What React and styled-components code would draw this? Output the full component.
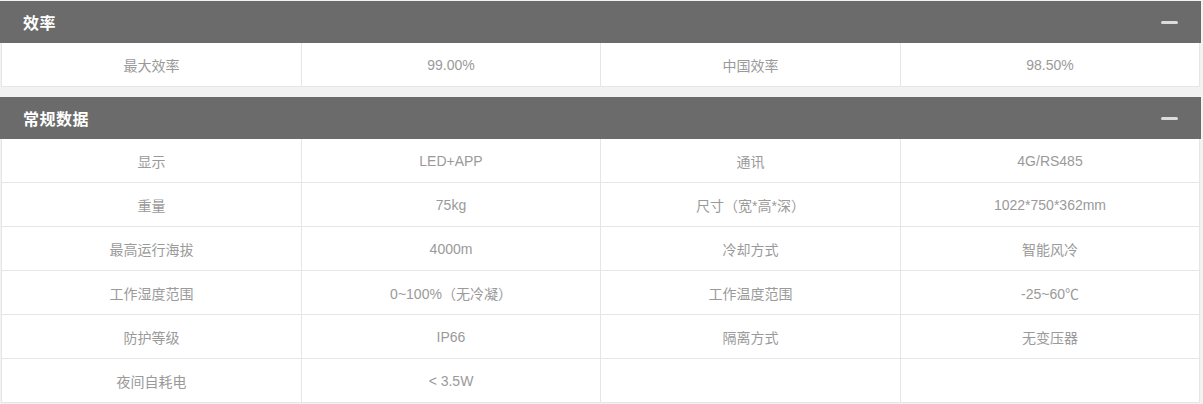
import React from 'react'
import styled, { createGlobalStyle } from "styled-components";

const GlobalStyle = createGlobalStyle`
body {
  margin: 0;
  background: #f2f2f2;
  font-family: "Liberation Sans", "Noto Sans CJK SC", sans-serif;
}
`;

const sections = [
  {
    title: '效率',
    rows: [['最大效率', '99.00%', '中国效率', '98.50%']],
  },
  {
    title: '常规数据',
    rows: [
      ['显示', 'LED+APP', '通讯', '4G/RS485'],
      ['重量', '75kg', '尺寸（宽*高*深）', '1022*750*362mm'],
      ['最高运行海拔', '4000m', '冷却方式', '智能风冷'],
      ['工作湿度范围', '0~100%（无冷凝）', '工作温度范围', '-25~60℃'],
      ['防护等级', 'IP66', '隔离方式', '无变压器'],
      ['夜间自耗电', '< 3.5W', '', ''],
    ],
  },
];

const App = () => {
  return (
    <>
      <GlobalStyle />
      <Page>
        {sections.map((s) => (
          <Section key={s.title}>
            <Header>
              <Title>{s.title}</Title>
              <Collapse />
            </Header>
            <Table>
              {s.rows.map((r, i) => (
                <Row key={i}>
                  {r.map((c, j) => (
                    <Cell key={j}>{c}</Cell>
                  ))}
                </Row>
              ))}
            </Table>
          </Section>
        ))}
      </Page>
    </>
  )
}

const Page = styled.div`
width: 1201px;
padding-top: 1px;
display: flex;
flex-direction: column;
gap: 10px;
`;

const Section = styled.section`
display: flex;
flex-direction: column;
`;

const Header = styled.div`
height: 42px;
background: #6b6b6b;
display: flex;
align-items: center;
justify-content: space-between;
padding: 0 23px 0 23px;
box-sizing: border-box;
`;

const Title = styled.h3`
margin: 0;
color: #fff;
font-size: 16px;
font-weight: bold;
letter-spacing: 0.5px;
`;

const Collapse = styled.span`
width: 17px;
height: 3px;
border-radius: 2px;
background: #dcdcdc;
`;

const Table = styled.div`
margin-left: 1px;
width: 1199px;
background: #fff;
border-left: 1px solid #e6e6e6;
box-sizing: border-box;
`;

const Row = styled.div`
display: grid;
grid-template-columns: 300px 299px 300px 299px;
border-bottom: 1px solid #e6e6e6;
`;

const Cell = styled.div`
height: 43px;
display: flex;
align-items: center;
justify-content: center;
font-size: 14px;
color: #9a9a9a;
border-right: 1px solid #e6e6e6;
`;

export default App;
